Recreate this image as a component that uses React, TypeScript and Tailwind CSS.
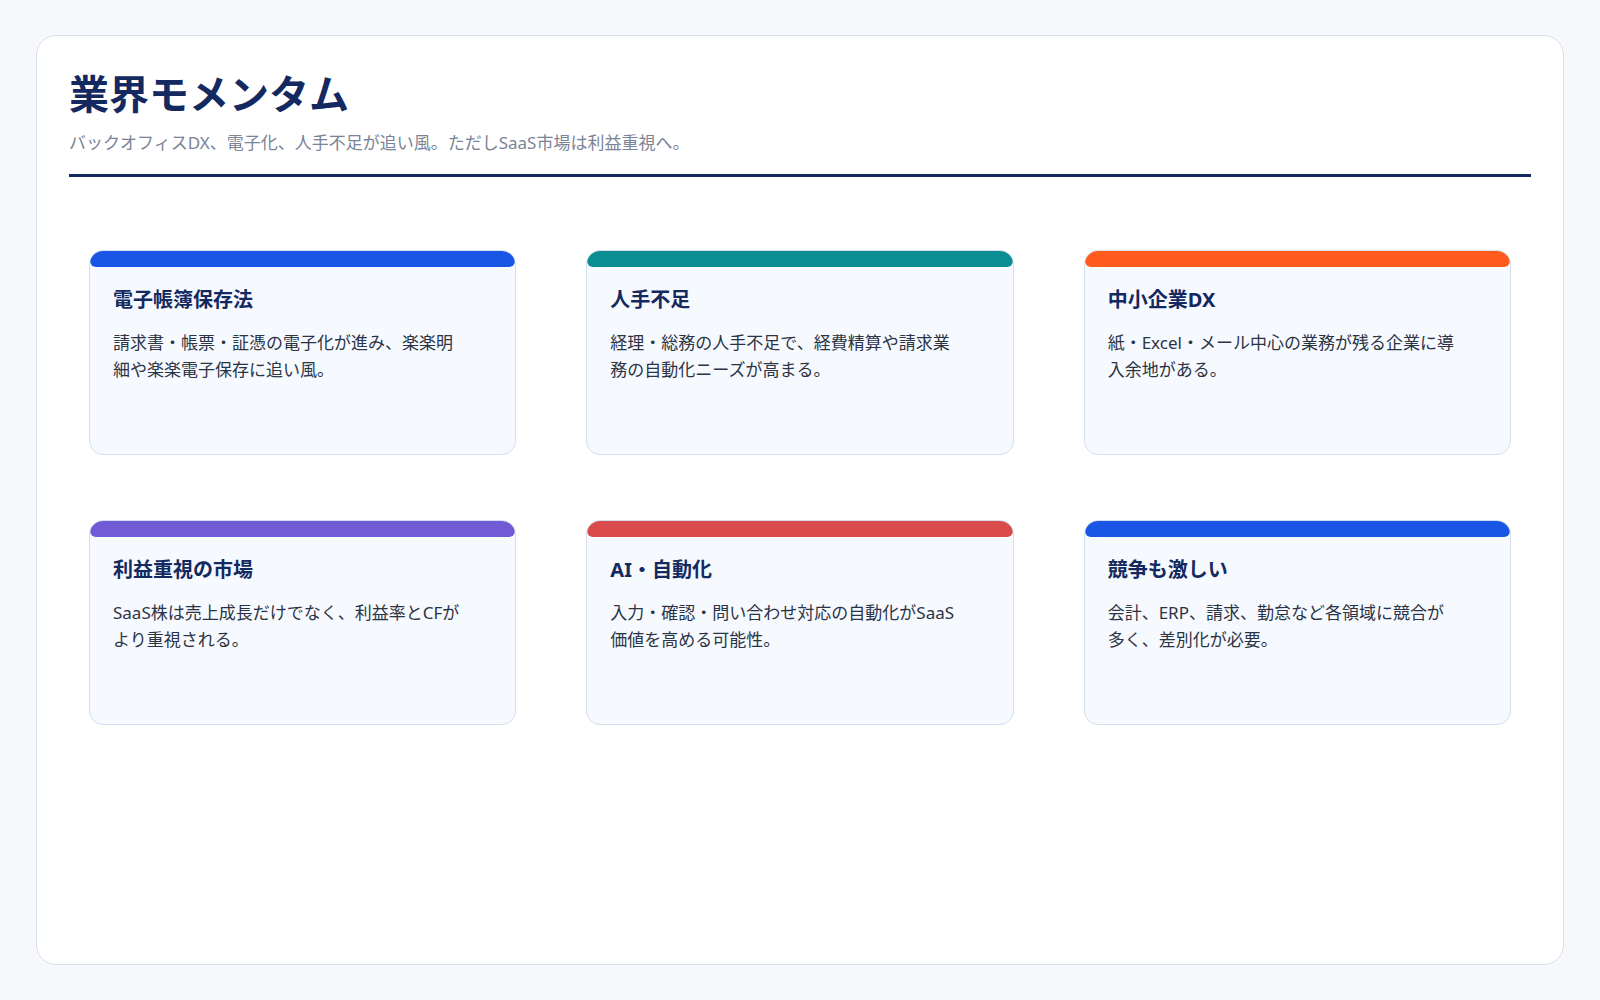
const cards = [
  { c: "bg-[#1a56e6]", t: "電子帳簿保存法", b: "請求書・帳票・証憑の電子化が進み、楽楽明細や楽楽電子保存に追い風。" },
  { c: "bg-[#0b8e92]", t: "人手不足", b: "経理・総務の人手不足で、経費精算や請求業務の自動化ニーズが高まる。" },
  { c: "bg-[#ff5b1e]", t: "中小企業DX", b: "紙・Excel・メール中心の業務が残る企業に導入余地がある。" },
  { c: "bg-[#715bd4]", t: "利益重視の市場", b: "SaaS株は売上成長だけでなく、利益率とCFがより重視される。" },
  { c: "bg-[#da4b4b]", t: "AI・自動化", b: "入力・確認・問い合わせ対応の自動化がSaaS価値を高める可能性。" },
  { c: "bg-[#1a56e6]", t: "競争も激しい", b: "会計、ERP、請求、勤怠など各領域に競合が多く、差別化が必要。" },
];
export default function App() {
  return (
    <div className="min-h-[1000px] bg-[#f6f8fb] p-[36px] pt-[35px]" style={{ fontFamily: '"Noto Sans", "Noto Sans CJK JP", sans-serif' }}>
      <div className="h-[930px] rounded-[20px] border border-[#d8e0ec] bg-white px-[32px] pt-[30px]">
        <h1 className="text-[40px] font-bold leading-[56px] text-[#13295f]">業界モメンタム</h1>
        <p className="mt-[8px] text-[17px] text-[#7a8496]">バックオフィスDX、電子化、人手不足が追い風。ただしSaaS市場は利益重視へ。</p>
        <div className="mt-[18px] h-[3px] bg-[#13295f]" />
        <div className="mx-[20px] mt-[73px] grid grid-cols-3 gap-x-[70px] gap-y-[65px]">
          {cards.map((k, i) => (
            <div key={i} className="h-[205px] overflow-hidden rounded-[14px] border border-[#d4deed] bg-[#f6f9fe]">
              <div className={`h-[16px] ${k.c} rounded-b-[6px]`} />
              <div className="px-[23px] pt-[18px]">
                <h3 className="text-[20px] font-bold text-[#13295f]">{k.t}</h3>
                <p className="mt-[14px] pr-[30px] text-[17px] leading-[27px] text-[#2b3445]">{k.b}</p>
              </div>
            </div>
          ))}
        </div>
      </div>
    </div>
  );
}
